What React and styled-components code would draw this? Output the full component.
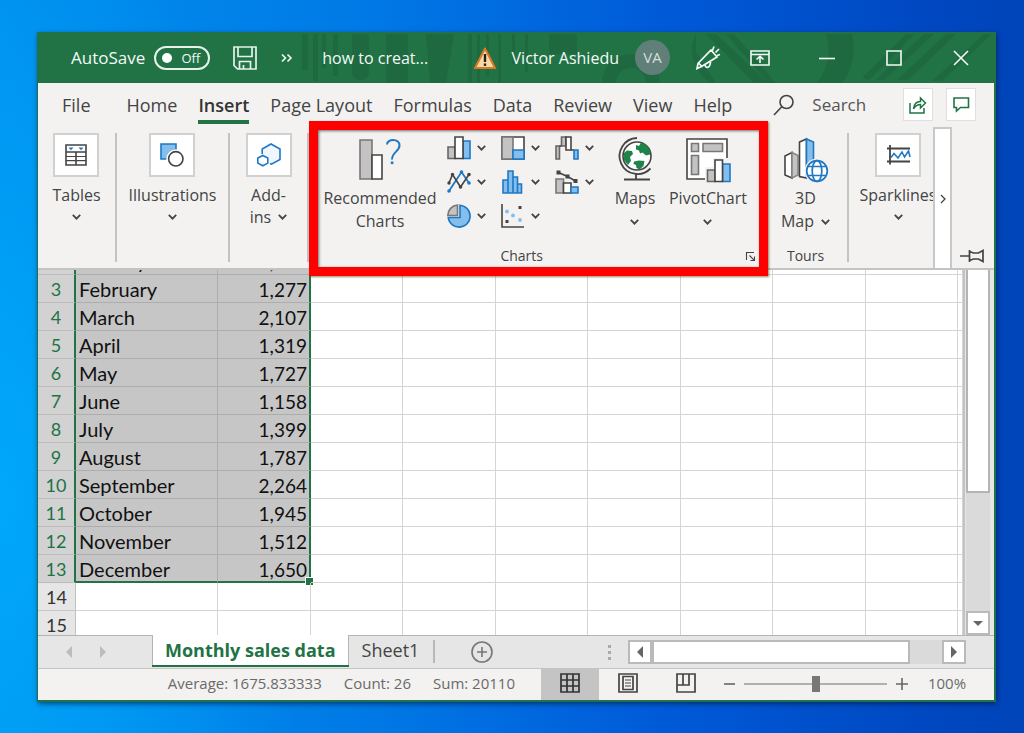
import React from "react";
import styled, { createGlobalStyle, css } from "styled-components";

const UI_FONT = '"Open Sans", "Noto Sans", sans-serif';
const CELL_FONT = 'Lato, "Noto Sans", sans-serif';
const GREEN = "#217346";
const INK = "#444444";
const LINE = "#c3c3c3";
const BLUE = "#1f78c4";
const SKY = "#83beec";
const GREY = "#c3c3c3";

const GlobalStyle = createGlobalStyle`
  * { box-sizing: border-box; }
  body { margin: 0; font-family: ${UI_FONT}; color: ${INK}; }
  button, input { font: inherit; color: inherit; }
  button { border: 0; padding: 0; margin: 0; background: none; cursor: pointer; }
  svg { display: block; flex: none; overflow: visible; }
`;

const Desktop = styled.div`
  display: flex;
  height: 100vh;
  min-height: 480px;
  padding: 32px 28px 31px 37px;
  background:
    radial-gradient(ellipse 320px 600px at 0 68%, rgba(0, 176, 255, 0.75), rgba(0, 160, 255, 0)),
    linear-gradient(to right, #0090ee 0%, #007ae6 35%, #005ad8 65%, #0048c2 90%, #0044b8 100%);
`;

const Window = styled.main`
  flex: 1;
  min-width: 0;
  display: flex;
  flex-direction: column;
  border: solid ${GREEN};
  border-width: 0 2px 2px 1px;
  background: #f3f2f1;
  box-shadow: 1px 2px 5px rgba(0, 20, 60, 0.6);
`;

/* ---------- Title bar ---------- */

const TitleBar = styled.header`
  position: relative;
  flex: none;
  height: 51px;
  display: flex;
  align-items: center;
  padding-left: 33px;
  color: #f4faf6;
  background: ${GREEN};
  font-size: 16px;
  line-height: 24px;
  white-space: nowrap;
`;

const TitleArt = styled.svg`
  position: absolute;
  right: 0;
  top: 0;
  pointer-events: none;
`;

const TitleGroup = styled.div`
  position: relative;
  display: flex;
  align-items: center;
  margin-left: ${(p) => (p.$end ? "auto" : "0")};
  height: 100%;
`;

const AutoSave = styled.label`
  display: flex;
  align-items: center;
  gap: 9px;
  font-size: 17px;
`;

const Toggle = styled.span`
  display: flex;
  align-items: center;
  justify-content: space-between;
  width: 56px;
  height: 24px;
  padding: 0 8px 0 6px;
  border: 2px solid #e6f2ea;
  border-radius: 12px;
  font-size: 13px;
  line-height: 20px;
`;

const ToggleInput = styled.input`
  appearance: none;
  width: 10px;
  height: 10px;
  margin: 0;
  border-radius: 50%;
  background: #fff;
`;

const TitleButton = styled.button`
  display: flex;
  align-items: center;
  justify-content: center;
  width: ${(p) => p.$w}px;
  height: 48px;
`;

const DocTitle = styled.span`
  position: relative;
  margin-left: 28px;
`;

const Account = styled.button`
  display: flex;
  align-items: center;
  gap: 16px;
  margin-right: 19px;
`;

const Avatar = styled.span`
  width: 35px;
  height: 35px;
  border-radius: 50%;
  background: #5f7f78;
  color: #d5dedb;
  font-size: 15px;
  line-height: 35px;
  text-align: center;
`;

/* ---------- Ribbon tabs ---------- */

const TabRow = styled.nav`
  flex: none;
  height: 44px;
  display: flex;
  align-items: flex-start;
  padding: 5px 18px 0 24px;
  font-size: 18px;
  line-height: 24px;
`;

const TabList = styled.div`
  display: flex;
  gap: 21px;
`;

const Tab = styled.button`
  display: flex;
  align-items: flex-start;
  height: 36px;
  padding-top: 3px;
  line-height: 28px;
  white-space: nowrap;
  border-bottom: 4px solid transparent;
  ${(p) => p.$first && css`margin-right: 15px;`}
  ${(p) => p.$active && css`border-color: ${GREEN}; font-weight: 600; color: #333;`}
`;

const SearchField = styled.label`
  flex: 1;
  min-width: 0;
  display: flex;
  align-items: center;
  gap: 18px;
  height: 33px;
  margin-left: 41px;
`;

const SearchInput = styled.input`
  width: 72px;
  min-width: 0;
  padding: 0;
  border: 0;
  outline: 0;
  background: none;
  font-size: 17px;
  &::placeholder { color: #555; opacity: 1; }
`;

const TabActions = styled.div`
  display: flex;
  gap: 13px;
`;

const ActionButton = styled.button`
  display: flex;
  align-items: center;
  justify-content: center;
  width: 30px;
  height: 33px;
  background: #fff;
  border: 1px solid #e1dfdd;
`;

/* ---------- Ribbon ---------- */

const Ribbon = styled.section`
  position: relative;
  z-index: 1;
  flex: none;
  height: 143px;
  display: flex;
  border-bottom: 2px solid ${LINE};
  font-size: 16px;
`;

const Group = styled.div`
  flex: 0 0 ${(p) => p.$w}px;
  display: flex;
  flex-direction: column;
  align-items: center;
  padding-top: 6px;
`;

const ToursGroup = styled(Group)`
  padding: 4px 4px 0 0;
`;

const ClippedGroup = styled.div`
  flex: 1;
  min-width: 0;
  overflow: hidden;
  display: flex;
`;

const Separator = styled.div`
  flex: none;
  width: 2px;
  margin: 6px 0;
  background: ${LINE};
`;

const RibbonButton = styled.button`
  display: flex;
  flex-direction: column;
  align-items: center;
  gap: 7px;
  line-height: 22px;
`;

const IconBox = styled.span`
  display: flex;
  align-items: center;
  justify-content: center;
  width: 46px;
  height: 44px;
  background: #fff;
  border: 2px solid #d0d0d0;
`;

const Caption = styled.span`
  display: flex;
  flex-direction: column;
  align-items: center;
`;

const CaptionLine = styled.span`
  display: flex;
  align-items: center;
  justify-content: center;
  gap: 7px;
  height: ${(p) => (p.$tall ? 23 : 22)}px;
  white-space: nowrap;
`;

const LargeButton = styled.button`
  display: flex;
  flex-direction: column;
  align-items: center;
  gap: 3px;
  width: ${(p) => p.$w}px;
  padding-top: 5px;
  line-height: 23px;
`;

const GroupLabel = styled.div`
  margin-top: auto;
  font-size: 14px;
  line-height: 24px;
`;

const ChartsGroup = styled.div`
  position: relative;
  flex: 0 0 459px;
  display: flex;
  flex-direction: column;
  padding: 4px 0 0 12px;
`;

const ChartsBody = styled.div`
  display: flex;
  align-items: flex-start;
`;

const ChartGrid = styled.div`
  display: grid;
  grid-template-columns: repeat(3, 54px);
  grid-auto-rows: 34px;
  margin-left: 8px;
`;

const ChartButton = styled.button`
  display: flex;
  align-items: center;
  gap: 6px;
`;

const ChartsFooter = styled.div`
  margin-top: auto;
  display: flex;
  align-items: center;
  justify-content: flex-end;
  gap: 203px;
  padding-right: 13px;
  font-size: 14px;
  line-height: 24px;
`;

const Highlight = styled.div`
  position: absolute;
  inset: -6px 0 -8px 0;
  border: 9px solid #fe0000;
  box-shadow: 1px 1px 2px rgba(80, 60, 0, 0.6), inset 1px 1px 3px rgba(0, 0, 0, 0.55);
  pointer-events: none;
`;

const RibbonScroll = styled.button`
  display: flex;
  align-items: center;
  justify-content: center;
  flex: 0 0 19px;
  background: #fff;
  border: 2px solid #c8c8c8;
  border-bottom: 0;
`;

const PinArea = styled.div`
  flex: 0 0 42px;
  display: flex;
  align-items: flex-end;
  padding: 0 0 5px 8px;
`;

/* ---------- Worksheet ---------- */

const SheetArea = styled.section`
  flex: 1;
  min-height: 0;
  display: flex;
  background: #e6e6e6;
`;

const GridView = styled.div`
  flex: 1;
  min-width: 0;
  overflow: hidden;
  background: #fff;
  border-right: 2px solid ${LINE};
`;

const Grid = styled.table`
  width: 100%;
  margin-top: -23px;
  table-layout: fixed;
  border-collapse: separate;
  border-spacing: 0;
  font-family: ${CELL_FONT};
  font-size: 20px;
  line-height: 23px;
  color: #111;
`;

const Col = styled.col`
  width: ${(p) => (p.$w ? `${p.$w}px` : "auto")};
`;

const RowHead = styled.th`
  height: 28px;
  padding: 3px 0 0;
  vertical-align: top;
  font-size: 18px;
  font-weight: 400;
  text-align: center;
  background: ${(p) => (p.$on ? "#d2d2d2" : "#e6e6e6")};
  color: ${(p) => (p.$on ? GREEN : "#333")};
  border-bottom: 1px solid ${(p) => (p.$on ? "#bcbcbc" : "#c6c6c6")};
  border-right: ${(p) => (p.$on ? `2px solid ${GREEN}` : "1px solid #c0c0c0")};
`;

const Cell = styled.td`
  position: relative;
  height: 28px;
  padding: 3px 3px 0;
  vertical-align: top;
  white-space: nowrap;
  border-right: 1px solid #d4d4d4;
  border-bottom: 1px solid #d4d4d4;
  ${(p) => p.$on && css`
    background: #c6c6c6;
    border-color: #adadad;
  `}
  ${(p) => p.$num && css`
    padding-right: 2px;
    font-size: 19px;
    text-align: right;
    border-right: 2px solid ${GREEN};
  `}
  ${(p) => p.$last && css`border-bottom: 2px solid ${GREEN};`}
`;

const FillHandle = styled.span`
  position: absolute;
  right: -4px;
  bottom: -4px;
  width: 8px;
  height: 8px;
  background: ${GREEN};
  border: solid #fff;
  border-width: 1px 0 0 1px;
`;

const VScroll = styled.div`
  flex: 0 0 29px;
  display: flex;
  flex-direction: column;
  padding: 0 4px 0 1px;
`;

const VThumb = styled.div`
  flex: 0 0 61%;
  background: #fff;
  border: 2px solid #b4b4b4;
  border-top: 0;
`;

const Track = styled.div`
  flex: 1;
  background: #dadada;
`;

const ArrowButton = styled.button`
  flex: none;
  display: flex;
  align-items: center;
  justify-content: center;
  width: 24px;
  height: 24px;
  background: #fff;
  border: 2px solid #bababa;
`;

/* ---------- Sheet tabs ---------- */

const SheetBar = styled.div`
  flex: none;
  height: 34px;
  display: flex;
  background: #e6e6e6;
  border-top: 1px solid #b4b4b4;
  border-bottom: 1px solid #c4c4c4;
  font-size: 18px;
  line-height: 28px;
`;

const SheetNav = styled.div`
  flex: 0 0 114px;
  display: flex;
  align-items: center;
  gap: 26px;
  padding-left: 27px;
`;

const SheetTab = styled.button`
  height: 30px;
  margin-top: -1px;
  padding: 0 14px 0 13px;
  white-space: nowrap;
  ${(p) => p.$active && css`
    padding: 0 12px;
    color: ${GREEN};
    font-weight: 700;
    background: #fff;
    border: solid #b4b4b4;
    border-width: 0 1px;
    box-shadow: 0 2px 0 ${GREEN};
  `}
`;

const TabDivider = styled.div`
  width: 2px;
  margin: 4px 0 5px;
  background: #b8b8b8;
`;

const AddSheet = styled.button`
  display: flex;
  align-items: center;
  padding: 0 36px;
`;

const Grip = styled.div`
  margin-left: auto;
  padding-right: 17px;
  display: flex;
  align-items: center;
`;

const HScroll = styled.div`
  flex: 0 0 338px;
  display: flex;
  align-items: center;
  margin-right: 28px;
`;

const HThumb = styled.div`
  flex: 0 0 258px;
  height: 24px;
  background: #fff;
  border: 2px solid #bababa;
`;

const HTrack = styled(Track)`
  height: 24px;
`;

/* ---------- Status bar ---------- */

const StatusBar = styled.footer`
  flex: none;
  height: 31px;
  display: flex;
  align-items: flex-start;
  justify-content: flex-end;
  font-size: 15px;
  line-height: 29px;
  color: #6a6a6a;
  white-space: nowrap;
`;

const Stats = styled.div`
  display: flex;
  gap: 22px;
  margin-right: 26px;
`;

const ViewButton = styled.button`
  display: flex;
  align-items: center;
  justify-content: center;
  width: 58px;
  height: 31px;
  padding-bottom: 3px;
  background: ${(p) => (p.$active ? "#c4c4c4" : "none")};
`;

const ZoomStep = styled.button`
  display: flex;
  align-items: center;
  justify-content: center;
  width: 29px;
  height: 30px;
`;

const ZoomSlider = styled.input`
  appearance: none;
  width: 143px;
  height: 16px;
  margin: 7px 0;
  background: linear-gradient(#b0b0b0, #b0b0b0) center / 100% 2px no-repeat;
  &::-webkit-slider-thumb {
    appearance: none;
    width: 8px;
    height: 16px;
    background: #777;
  }
`;

const ZoomValue = styled.span`
  width: 62px;
  margin-right: 16px;
  text-align: center;
`;

/* ---------- Icons ---------- */

const Icon = ({ w = 24, h = 24, children, ...rest }) => (
  <svg width={w} height={h} viewBox={`0 0 ${w} ${h}`} fill="none" stroke={INK} strokeWidth="1.6" aria-hidden="true" {...rest}>
    {children}
  </svg>
);

const Chevron = () => (
  <Icon w={9} h={6} strokeWidth="1.8"><path d="M.8 .8L4.5 4.6 8.2 .8" /></Icon>
);

const SaveIcon = () => (
  <Icon stroke="#e6f2ea" strokeWidth="1.7">
    <path d="M1 1h22v22H4.500L1 19.500zM5 1v9.500h14V1M6.500 23v-7.500h11V23M10.500 23v-4" />
  </Icon>
);

const WarningIcon = () => (
  <Icon w={22} h={22}>
    <path d="M11 1.500L21 21H1z" fill="#f9d9a0" stroke="#d9782a" strokeWidth="2" strokeLinejoin="round" />
    <path d="M11 7v8" stroke="#222" strokeWidth="2.400" />
    <path d="M11 16.500v2.400" stroke="#222" strokeWidth="2.400" />
  </Icon>
);

const MegaphoneIcon = () => (
  <Icon stroke="#f4faf6" strokeWidth="1.700">
    <path d="M15 4l6 7L5.500 20.500 1 22.500l1-5zM2.500 17l4 4M9 18.500c0 4 5 4.500 5.500-2.500M16.500 4.500l1.500-4M19.500 6.500l3.500-3.500M21 9.500l3-1" />
  </Icon>
);

const RibbonDisplayIcon = () => (
  <Icon w={20} h={16} stroke="#f4faf6">
    <path d="M1 1h18v14H1zM1 4.500h18M10 13V6.500M6.500 9.500L10 6.300l3.500 3.200" />
  </Icon>
);

const SearchIcon = () => (
  <Icon w={21} h={22}>
    <circle cx="13.500" cy="8" r="6.500" />
    <path d="M9 12.500L1 21" />
  </Icon>
);

const ShareIcon = () => (
  <Icon w={18} h={18} stroke={GREEN} strokeWidth="1.500">
    <path d="M1 7v10h14v-5M4.500 13c.5-5 3-7.500 7-7.500V2l5 5-5 5V8.500c-3 0-5 1-7 4.500z" />
  </Icon>
);

const CommentIcon = () => (
  <Icon w={16} h={15} stroke={GREEN} strokeWidth="1.600">
    <path d="M1 1h14.500v9.500H7.500L3.500 14v-3.500H1z" />
  </Icon>
);

const TableIcon = () => (
  <Icon w={22} h={22}>
    <path d="M1 1h20v20H1zM1 8h20M11 8v13" />
    <path d="M1 12.500h20M1 16.700h20" strokeWidth="1.200" />
    <path d="M3.500 3.500h5L6 6.200zM13.500 3.500h5L16 6.200z" fill={BLUE} stroke="none" />
  </Icon>
);

const ShapesIcon = () => (
  <Icon>
    <path d="M1 1h15v6a8 8 0 0 0-8.500 9H1z" fill={SKY} stroke={BLUE} />
    <circle cx="15.800" cy="15.800" r="8.800" stroke="#fff" fill="#fff" />
    <circle cx="15.800" cy="15.800" r="7.200" fill="#fff" />
  </Icon>
);

const AddinsIcon = () => (
  <Icon stroke={BLUE}>
    <path d="M5.200 11V6L14 1l9 5v10.500l-8.500 4.700-1.500-.7" fill="#f0f6fc" />
    <path d="M5.800 12.500l5 2.600v5l-5 2.700-5-2.700v-5z" fill="#fff" />
  </Icon>
);

const RecommendedIcon = () => (
  <Icon w={42} h={48}>
    <path d="M1 4h12v39H1z" fill={GREY} stroke="#777" />
    <path d="M13 19h10v24H13z" fill="#fff" />
    <path d="M28 8.500C28 2.500 40.500 2 40.500 9.500c0 6-7.500 6.500-7.500 14" stroke={BLUE} strokeWidth="2" />
    <path d="M31.800 25.500h2.600v2.600h-2.600z" fill={BLUE} stroke="none" />
  </Icon>
);

const ColumnIcon = () => (
  <Icon>
    <path d="M1 11h7v11.500H1z" fill={GREY} stroke="#666" />
    <path d="M16 5h7v17.500h-7z" fill={SKY} stroke={BLUE} />
    <path d="M8 1h8v21.500H8z" fill="#fff" />
  </Icon>
);

const LineIcon = () => (
  <Icon>
    <path d="M2 21L14.500 2l7.500 11" stroke={BLUE} strokeWidth="1.800" />
    <path d="M2 13L5.500 4.500l8 12.500L22 4.500" strokeWidth="1.600" />
    <g fill={BLUE} stroke="none"><circle cx="2" cy="21" r="1.800" /><circle cx="14.500" cy="2" r="1.800" /><circle cx="22" cy="13" r="1.800" /></g>
    <g fill={INK} stroke="none"><circle cx="2" cy="13" r="1.700" /><circle cx="5.500" cy="4.500" r="1.700" /><circle cx="13.500" cy="17" r="1.800" /><circle cx="22" cy="4.500" r="1.800" /></g>
  </Icon>
);

const PieIcon = () => (
  <Icon>
    <path d="M13 1.200A11 11 0 1 1 1.200 13.500H13z" fill={SKY} stroke={BLUE} />
    <path d="M10.500 1v10.500H.8A10.500 10.500 0 0 1 10.500 1z" fill={GREY} stroke="#777" />
  </Icon>
);

const HierarchyIcon = () => (
  <Icon>
    <path d="M1 1h22v22H1z" fill="#fff" />
    <path d="M1 1h11v22H1z" fill={GREY} stroke="#777" />
    <path d="M12 14h11v9H12z" fill={SKY} stroke={BLUE} />
  </Icon>
);

const HistogramIcon = () => (
  <Icon stroke={BLUE} fill={SKY}>
    <path d="M2 10h5v13H2zM7 1h5v22H7zM12 7h4.500v16H12zM16.500 14H20.500v9h-4z" />
  </Icon>
);

const ScatterIcon = () => (
  <Icon>
    <path d="M1 0v23h22" />
    <g fill={INK} stroke="none"><path d="M17.500 2h3v3h-3zM4.500 16h3v3h-3z" /></g>
    <g fill={SKY} stroke="none"><circle cx="6" cy="7.500" r="1.900" /><circle cx="12" cy="11.500" r="1.900" /><circle cx="19" cy="16" r="1.900" /></g>
  </Icon>
);

const WaterfallIcon = () => (
  <Icon>
    <path d="M1 10h3.500v13H1zM6.500 1H11v9H6.500z" fill={GREY} stroke="#666" />
    <path d="M11 1h5v13h-5z" fill="#fff" />
    <path d="M4.500 10h2M16 14h3" />
    <path d="M19 14h4v9h-4z" fill={SKY} stroke={BLUE} />
  </Icon>
);

const ComboIcon = () => (
  <Icon>
    <path d="M1 9h7.500v14H1z" fill={GREY} stroke="#777" />
    <path d="M8.500 13H16v10H8.500z" fill="#fff" />
    <path d="M16 17h7v6h-7z" fill={SKY} stroke={BLUE} />
    <path d="M3.500 2.500L12.500 6.500 20.500 11" />
    <path d="M1.500 .5h4v4h-4zM10.500 4.500h4v4h-4zM18.500 9h4v4h-4z" fill={INK} stroke="none" />
  </Icon>
);

const MapsIcon = () => (
  <Icon w={36} h={48}>
    <circle cx="20" cy="20" r="14" fill="#fff" />
    <path d="M7 17l3-2.500 5 .5 1 3-3 3 1 4-3 4-4-5zM19 9l3 1 2-3.500 6 3 3.500 6-.5 3-4 1-3.500-3-2.500 1-1-3-3-1zM17 25.500l5-1 5.500.5-1 5-4 3.500-3-1.500-.5-3-2.500-1z" fill="#1e8449" stroke="none" />
    <path d="M20 2A18 18 0 1 0 33.500 32.500M19 37.500V43M7 43.500h26" strokeWidth="1.800" />
  </Icon>
);

const PivotIcon = () => (
  <Icon w={46} h={48}>
    <path d="M2 3h39v39H2z" fill="#fff" stroke="none" />
    <path d="M42 24V3H2v40h18" />
    <path d="M6.500 7.500h7v8h-7zM18 7.500h19.500v8H18zM6.500 19.500h7v19h-7z" fill={GREY} stroke="#777" />
    <path d="M20 31h8V22h18v24H20z" fill="#f3f2f1" stroke="none" />
    <path d="M22.500 34H30v11.500h-7.500z" fill={GREY} stroke="#666" />
    <path d="M37.500 28H45v17.500h-7.500z" fill={SKY} stroke={BLUE} />
    <path d="M30 24h7.500v21.500H30z" fill="#fff" />
  </Icon>
);

const Map3DIcon = () => (
  <Icon w={44} h={48}>
    <path d="M1 20l7-3.500v25.500L1 39z" fill="#fff" />
    <path d="M8 16.500l6 3v19.500l-6 3z" fill={GREY} stroke="#888" />
    <path d="M15.500 6l7-3v39l-7-1.500z" fill="#fff" />
    <path d="M22.500 3l7 3v22l-7 10z" fill={SKY} stroke={BLUE} />
    <circle cx="33" cy="35" r="12.500" fill="#f3f2f1" stroke="none" />
    <g stroke={BLUE} strokeWidth="1.700">
      <circle cx="33" cy="35" r="10.300" fill="#fff" />
      <ellipse cx="33" cy="35" rx="4.800" ry="10.300" />
      <path d="M24 30.500h18M24 39.500h18" />
    </g>
  </Icon>
);

const SparkIcon = () => (
  <Icon w={24} h={22}>
    <path d="M1 4.500h23M1 17.500h23M4 1v19.500" strokeWidth="1.800" />
    <path d="M5 13.500l3-4 4 4.500 4-6 2.500 5 4-6 1.500 6" stroke={BLUE} />
  </Icon>
);

const LauncherIcon = () => (
  <Icon w={9} h={9} strokeWidth="1.100"><path d="M.5 8V.5H8M3.500 3.500L8.300 8.300M8.500 4.500v4h-4" /></Icon>
);

const PinIcon = () => (
  <Icon w={24} h={14} strokeWidth="1.700">
    <path d="M0 7h9M9.500 1v12M9.500 2.500l4 1.500h5L23 1.500v11L18.500 10h-5l-4 1.500" />
  </Icon>
);

const Triangle = ({ dir, color = "#666" }) => {
  const shape = { left: "M7 0v12L1 6z", right: "M1 0v12L7 6z", down: "M0 1h10L5 6z" }[dir];
  const down = dir === "down";
  return <Icon w={down ? 10 : 8} h={down ? 7 : 12} stroke="none" fill={color}><path d={shape} /></Icon>;
};

const NormalViewIcon = () => (
  <Icon w={20} h={20} stroke="#333" strokeWidth="1.700"><path d="M1 1h18v18H1zM1 7h18M1 13h18M7 1v18M13 1v18" /></Icon>
);

const PageViewIcon = () => (
  <Icon w={20} h={20} strokeWidth="1.700"><path d="M1 1h18v18H1zM5 3.500h10v13H5z" /><path d="M7 7h6M7 10h6M7 13h6" strokeWidth="1.200" /></Icon>
);

const BreakViewIcon = () => (
  <Icon w={20} h={20} strokeWidth="1.700"><path d="M1 1h18v18H1zM7 1v11M1 12h12V1" /></Icon>
);

/* ---------- Composition ---------- */

const DropGroup = ({ icon, label, width, inlineEnd }) => (
  <Group $w={width}>
    <RibbonButton>
      <IconBox>{icon}</IconBox>
      <Caption>
        <CaptionLine>{label}</CaptionLine>
        <CaptionLine>{inlineEnd}<Chevron /></CaptionLine>
      </Caption>
    </RibbonButton>
  </Group>
);

const LargeDrop = ({ icon, width, first, second }) => (
  <LargeButton $w={width}>
    {icon}
    <Caption>
      <CaptionLine $tall>{first}</CaptionLine>
      <CaptionLine $tall>{second}</CaptionLine>
    </Caption>
  </LargeButton>
);

const CHARTS = [
  ["Column or bar chart", ColumnIcon],
  ["Hierarchy chart", HierarchyIcon],
  ["Waterfall chart", WaterfallIcon],
  ["Line or area chart", LineIcon],
  ["Statistic chart", HistogramIcon],
  ["Combo chart", ComboIcon],
  ["Pie or doughnut chart", PieIcon],
  ["Scatter chart", ScatterIcon],
];

const ROWS = [
  [2, "January", "1,965"],
  [3, "February", "1,277"],
  [4, "March", "2,107"],
  [5, "April", "1,319"],
  [6, "May", "1,727"],
  [7, "June", "1,158"],
  [8, "July", "1,399"],
  [9, "August", "1,787"],
  [10, "September", "2,264"],
  [11, "October", "1,945"],
  [12, "November", "1,512"],
  [13, "December", "1,650"],
  [14],
  [15],
];

const COLUMNS = [38, 142, 93, 92, 93, 92, 93, 92, 93, 92, null];
const TABS = ["File", "Home", "Insert", "Page Layout", "Formulas", "Data", "Review", "View", "Help"];

function Title() {
  return (
    <TitleBar>
      <TitleArt width="660" height="51" viewBox="0 0 660 51" fill="#1e693f" aria-hidden="true">
        <path d="M-32 2h6v36h-6zM-21 2h5v47h-5zM-12 2h4v34h-4zM-1 2h5v42h-5zM18 2h17v38a8 8 0 0 1-17 0zM52 2h22v49H52zM92 2h28l-8 49H96zM134 2h4v49h-4zM143 2h3v49h-3zM152 2h3v42h-3zM164 2h3v49h-3zM178 2h3v30h-3zM191 2h3v38h-3zM215 2h28v20h-28z" />
        <path d="M268 51a28 28 0 0 1 58 0h-14a14 14 0 0 0-30 0z" />
        <path d="M362 2c-10 20 0 38 14 49h6L362 20zM372 2h10l52 49h-14zM392 2h8l42 49h-8zM492 2h26c4 20 0 36-10 49h-25c12-16 14-32 9-49z" />
        <path d="M528 46L572 2h9l-46 46zM542 48L590 2h10l-50 46zM563 48L612 2h10l-48 46zM598 49L650 2h8l-50 47z" />
      </TitleArt>
      <TitleGroup>
        <AutoSave>
          AutoSave
          <Toggle><ToggleInput type="checkbox" />Off</Toggle>
        </AutoSave>
        <TitleButton $w={70} aria-label="Save"><SaveIcon /></TitleButton>
        <TitleButton $w={14} aria-label="More commands">
          <Icon w={12} h={8} stroke="#f4faf6"><path d="M1 .5L4.500 4 1 7.500M6.500 .5L10 4 6.500 7.500" /></Icon>
        </TitleButton>
      </TitleGroup>
      <DocTitle>how to creat...</DocTitle>
      <TitleGroup $end>
        <Account>
          <WarningIcon />
          <span>Victor Ashiedu</span>
          <Avatar>VA</Avatar>
        </Account>
        <TitleButton $w={38} aria-label="Coming soon"><MegaphoneIcon /></TitleButton>
        <TitleButton $w={66} aria-label="Ribbon display options"><RibbonDisplayIcon /></TitleButton>
        <TitleButton $w={67} aria-label="Minimize"><Icon w={16} h={16} stroke="#f4faf6"><path d="M0 8.500h16" /></Icon></TitleButton>
        <TitleButton $w={67} aria-label="Maximize"><Icon w={16} h={16} stroke="#f4faf6"><path d="M1 1h14v14H1z" /></Icon></TitleButton>
        <TitleButton $w={67} aria-label="Close"><Icon w={16} h={16} stroke="#f4faf6"><path d="M1 1l14 14M15 1L1 15" /></Icon></TitleButton>
      </TitleGroup>
    </TitleBar>
  );
}

export default function App() {
  return (
    <Desktop>
      <GlobalStyle />
      <Window>
        <Title />
        <TabRow>
          <TabList>
            {TABS.map((t, i) => <Tab key={t} $first={i === 0} $active={t === "Insert"}>{t}</Tab>)}
          </TabList>
          <SearchField>
            <SearchIcon />
            <SearchInput type="text" placeholder="Search" aria-label="Search" />
          </SearchField>
          <TabActions>
            <ActionButton aria-label="Share"><ShareIcon /></ActionButton>
            <ActionButton aria-label="Comments"><CommentIcon /></ActionButton>
          </TabActions>
        </TabRow>

        <Ribbon>
          <DropGroup icon={<TableIcon />} label="Tables" width={77} />
          <Separator />
          <DropGroup icon={<ShapesIcon />} label="Illustrations" width={111} />
          <Separator />
          <DropGroup icon={<AddinsIcon />} label="Add-" inlineEnd="ins" width={77} />
          <Separator />
          <ChartsGroup>
            <ChartsBody>
              <LargeDrop icon={<RecommendedIcon />} width={118} first="Recommended" second="Charts" />
              <ChartGrid>
                {CHARTS.map(([name, Glyph]) => (
                  <ChartButton key={name} aria-label={name}><Glyph /><Chevron /></ChartButton>
                ))}
              </ChartGrid>
              <LargeDrop icon={<MapsIcon />} width={52} first="Maps" second={<Chevron />} />
              <LargeDrop icon={<PivotIcon />} width={94} first="PivotChart" second={<Chevron />} />
            </ChartsBody>
            <ChartsFooter>
              <span>Charts</span>
              <button aria-label="See all charts"><LauncherIcon /></button>
            </ChartsFooter>
            <Highlight />
          </ChartsGroup>
          <ToursGroup $w={79}>
            <LargeDrop icon={<Map3DIcon />} width={74} first="3D" second={<>Map<Chevron /></>} />
            <GroupLabel>Tours</GroupLabel>
          </ToursGroup>
          <Separator />
          <ClippedGroup>
            <DropGroup icon={<SparkIcon />} label="Sparklines" width={98} />
          </ClippedGroup>
          <RibbonScroll aria-label="Scroll ribbon">
            <Icon w={6} h={10} strokeWidth="1.300"><path d="M1 1l4 4-4 4" /></Icon>
          </RibbonScroll>
          <PinArea><button aria-label="Pin the ribbon"><PinIcon /></button></PinArea>
        </Ribbon>

        <SheetArea>
          <GridView>
            <Grid>
              <colgroup>{COLUMNS.map((w, i) => <Col key={i} $w={w} />)}</colgroup>
              <tbody>
                {ROWS.map(([n, month, value]) => (
                  <tr key={n}>
                    <RowHead scope="row" $on={!!month}>{n}</RowHead>
                    <Cell $on={!!month} $last={n === 13}>{month}</Cell>
                    <Cell $on={!!month} $num={!!month} $last={n === 13}>
                      {value}
                      {n === 13 && <FillHandle />}
                    </Cell>
                    {COLUMNS.slice(3).map((_, i) => <Cell key={i} />)}
                  </tr>
                ))}
              </tbody>
            </Grid>
          </GridView>
          <VScroll>
            <VThumb />
            <Track />
            <ArrowButton aria-label="Scroll down"><Triangle dir="down" /></ArrowButton>
          </VScroll>
        </SheetArea>

        <SheetBar>
          <SheetNav>
            <button aria-label="Previous sheet"><Triangle dir="left" color="#bcbcbc" /></button>
            <button aria-label="Next sheet"><Triangle dir="right" color="#bcbcbc" /></button>
          </SheetNav>
          <SheetTab $active>Monthly sales data</SheetTab>
          <SheetTab>Sheet1</SheetTab>
          <TabDivider />
          <AddSheet aria-label="New sheet">
            <Icon w={22} h={22} stroke="#777"><circle cx="11" cy="11" r="10" /><path d="M6 11h10M11 6v10" /></Icon>
          </AddSheet>
          <Grip>
            <Icon w={3} h={15} stroke="none" fill="#aaa"><path d="M0 0h3v3H0zM0 6h3v3H0zM0 12h3v3H0z" /></Icon>
          </Grip>
          <HScroll>
            <ArrowButton aria-label="Scroll left"><Triangle dir="left" /></ArrowButton>
            <HThumb />
            <HTrack />
            <ArrowButton aria-label="Scroll right"><Triangle dir="right" /></ArrowButton>
          </HScroll>
        </SheetBar>

        <StatusBar>
          <Stats>
            <span>Average: 1675.833333</span>
            <span>Count: 26</span>
            <span>Sum: 20110</span>
          </Stats>
          <ViewButton $active aria-label="Normal view"><NormalViewIcon /></ViewButton>
          <ViewButton aria-label="Page layout view"><PageViewIcon /></ViewButton>
          <ViewButton aria-label="Page break preview"><BreakViewIcon /></ViewButton>
          <ZoomStep aria-label="Zoom out"><Icon w={11} h={12} stroke="#666"><path d="M0 6h11" /></Icon></ZoomStep>
          <ZoomSlider type="range" min="0" max="100" defaultValue="50" aria-label="Zoom" />
          <ZoomStep aria-label="Zoom in"><Icon w={12} h={12} stroke="#666"><path d="M0 6h12M6 0v12" /></Icon></ZoomStep>
          <ZoomValue>100%</ZoomValue>
        </StatusBar>
      </Window>
    </Desktop>
  );
}
